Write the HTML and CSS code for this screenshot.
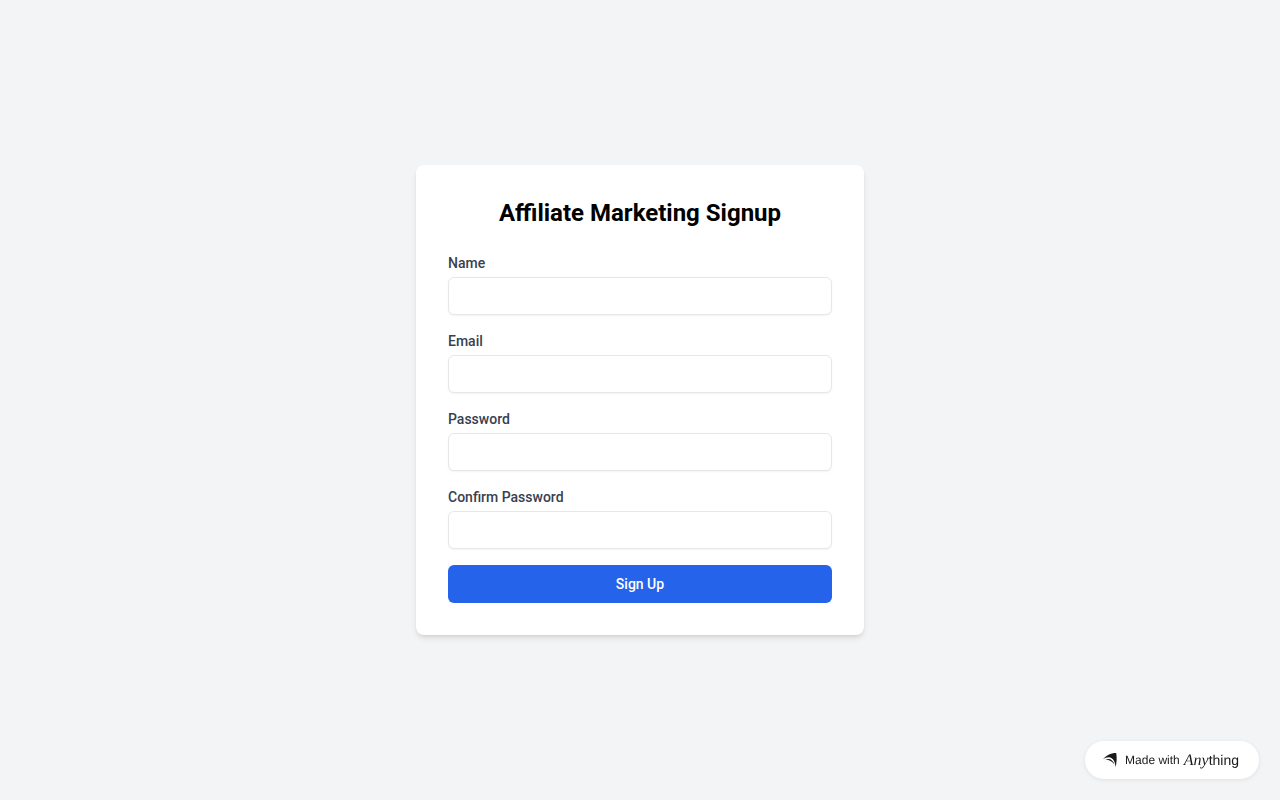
FILE: index.html
```html
<!DOCTYPE html>
<html lang="en">
<head>
<meta charset="utf-8">
<meta name="viewport" content="width=device-width, initial-scale=1">
<title>Affiliate Marketing Signup</title>
<link rel="stylesheet" href="styles.css">
</head>
<body>
<main class="page">
  <div class="card">
    <h1 class="title">Affiliate Marketing Signup</h1>
    <form class="form">
      <div class="field"><label for="name">Name</label><input id="name" type="text"></div>
      <div class="field"><label for="email">Email</label><input id="email" type="email"></div>
      <div class="field"><label for="password">Password</label><input id="password" type="password"></div>
      <div class="field"><label for="confirm">Confirm Password</label><input id="confirm" type="password"></div>
      <button class="submit" type="submit">Sign Up</button>
    </form>
  </div>
</main>
<a class="badge" href="#">
  <svg class="mark" viewBox="0 0 14 16" aria-hidden="true"><path d="M0 7.300C3 3.500 7.500 1 13.200 1C14 5.500 13.800 10 12.600 15.200C12.400 10.500 10.500 5.500 5.500 5.200C3.500 5.200 1.700 6 0 7.300Z"/><path d="M2.200 7.600C6.500 5.800 9.800 7.500 11.400 12.400C9.400 9.600 6.500 7.700 2.200 7.600Z"/></svg>
  <span>Made with</span>
  <span class="brand"><span class="any">Any</span><span class="thing">thing</span></span>
</a>
</body>
</html>
```

FILE: styles.css
```css
* { box-sizing: border-box; }
body { margin: 0; font-family: Roboto, sans-serif; background: #f3f4f6; }
.page { min-height: 100vh; display: flex; align-items: center; justify-content: center; }
.card { width: 100%; max-width: 448px; padding: 32px; background: #fff; border-radius: 8px; box-shadow: 0 4px 6px -1px rgba(0,0,0,.1), 0 2px 4px -2px rgba(0,0,0,.1); }
.title { margin: 0 0 24px; font-size: 24px; line-height: 32px; font-weight: 700; text-align: center; color: #000; }
.form { display: flex; flex-direction: column; gap: 16px; }
.field { display: flex; flex-direction: column; gap: 4px; }
.field label { font-size: 14px; line-height: 20px; font-weight: 500; color: #374151; }
.field input { width: 100%; height: 38px; padding: 8px 12px; font: 14px/20px Roboto, sans-serif; border: 1px solid #e5e7eb; border-radius: 6px; background: #fff; box-shadow: 0 1px 2px rgba(0,0,0,.05); }
.submit { height: 38px; padding: 8px 16px; font: 500 14px/20px Roboto, sans-serif; color: #fff; background: #2563eb; border: 0; border-radius: 6px; cursor: pointer; }
.badge { position: fixed; right: 21px; bottom: 21px; display: flex; align-items: center; height: 38px; padding: 0 20px 0 18px; border-radius: 19px; background: #fff; color: #18191b; font: 12px/16px "Liberation Sans", sans-serif; text-decoration: none; white-space: nowrap; text-rendering: geometricPrecision; box-shadow: 0 1px 5px rgba(0,0,0,.08); }
.mark { width: 14px; height: 16px; margin-right: 8px; fill: #18191b; }
.brand { display: flex; align-items: baseline; margin-left: 4px; }
.any { font: italic 16px/20px "Liberation Serif", serif; }
.thing { font: 14px/20px "Liberation Sans", sans-serif; }
```
